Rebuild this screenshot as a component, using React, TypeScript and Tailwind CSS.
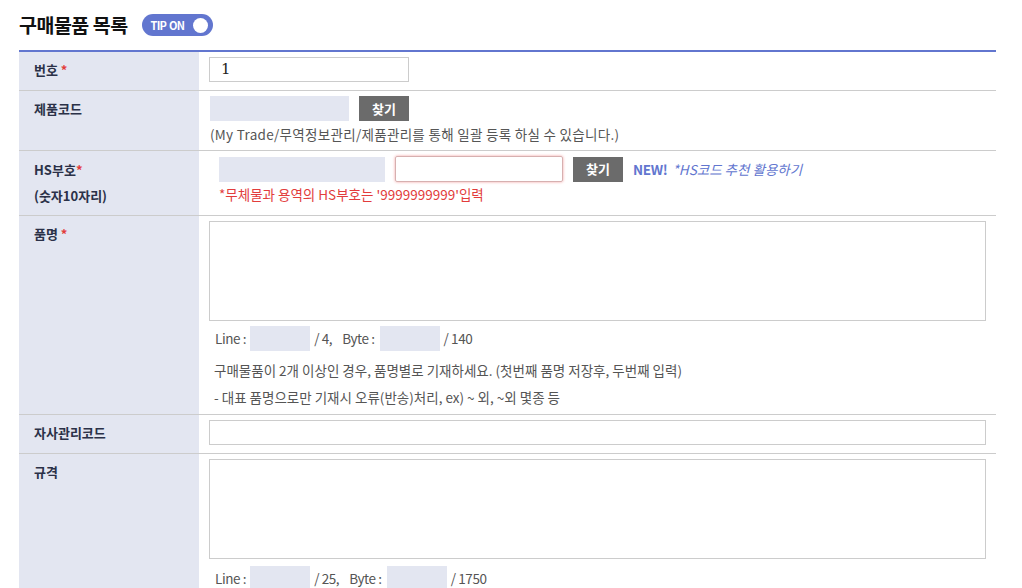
import React from 'react';

const font = { fontFamily: '"Noto Sans CJK KR", "Noto Sans", sans-serif' };

function Label({ children, star }: { children: React.ReactNode; star?: boolean }) {
  return (
    <div className="w-[180px] shrink-0 bg-[#e3e6f1] pl-[15px] pt-[8px] text-[13px] font-bold text-[#2b3148]">
      {children}
      {star && <span className="text-[#e23c3c]"> *</span>}
    </div>
  );
}

function Counter({ max, total }: { max: string; total: string }) {
  return (
    <div className="flex h-[25px] items-center text-[13.5px] text-[#555] tracking-[-0.4px]">
      <span className="ml-[6px]">Line :</span>
      <span className="ml-[4px] h-[25px] w-[60px] bg-[#e3e6f1]" />
      <span className="ml-[4px]">/ {max},</span>
      <span className="ml-[10px]">Byte :</span>
      <span className="ml-[5px] h-[25px] w-[60px] bg-[#e3e6f1]" />
      <span className="ml-[4px]">/ {total}</span>
    </div>
  );
}

export default function App() {
  return (
    <div className="h-[588px] w-[1022px] overflow-hidden bg-white" style={font}>
      <div className="mt-[13px] flex h-[24px] items-center pl-[19px]">
        <h2 className="text-[19.5px] font-bold leading-[24px] text-[#111] tracking-[-0.5px]">구매물품 목록</h2>
        <div className="ml-[14px] flex h-[22px] w-[71px] items-center justify-between rounded-full bg-[#6276cf] pl-[9px] pr-[5px]">
          <span className="flex gap-[3px] text-[11px] font-bold tracking-[-0.8px] text-white">
            <span>TIP</span>
            <span>ON</span>
          </span>
          <span className="h-[15px] w-[15px] rounded-full bg-white" />
        </div>
      </div>

      <div className="mx-[19px] mt-[13px] w-[977px] border-t-2 border-[#6276cf]">
        {/* 번호 */}
        <div className="flex h-[39px] border-b border-[#ccc]">
          <Label star>번호</Label>
          <div className="pl-[10px] pt-[5px]">
            <div className="flex h-[25px] w-[200px] items-center border border-[#ccc] pl-[11px] text-[15px] text-[#222]" style={{ fontFamily: '"DejaVu Serif", serif' }}>1</div>
          </div>
        </div>

        {/* 제품코드 */}
        <div className="flex h-[60px] border-b border-[#ccc]">
          <Label>제품코드</Label>
          <div className="pl-[11px] pt-[5px]">
            <div className="flex items-center">
              <span className="h-[25px] w-[139px] bg-[#e3e6f1]" />
              <button className="ml-[10px] flex h-[25px] w-[50px] items-center justify-center bg-[#6b6b6b] text-[13px] font-bold text-white">찾기</button>
            </div>
            <p className="mt-[3px] text-[13.5px] tracking-[0.3px] text-[#555]">
              (My Trade/무역정보관리/제품관리를 통해 일괄 등록 하실 수 있습니다.)
            </p>
          </div>
        </div>

        {/* HS부호 */}
        <div className="flex h-[65px] border-b border-[#ccc]">
          <div className="w-[180px] shrink-0 bg-[#e3e6f1] pl-[15px] pt-[6px] text-[13px] font-bold leading-[26px] text-[#2b3148]">
            HS부호<span className="text-[#e23c3c]">*</span>
            <br />
            (숫자10자리)
          </div>
          <div className="pl-[20px] pt-[5px]">
            <div className="flex items-center">
              <span className="h-[25px] w-[166px] bg-[#e3e6f1]" />
              <span className="ml-[10px] h-[26px] w-[168px] rounded-[2px] border border-[#d7b0b0] shadow-[0_0_3px_#f3a0a0]" />
              <button className="ml-[10px] flex h-[25px] w-[50px] items-center justify-center bg-[#6b6b6b] text-[13px] font-bold text-white">찾기</button>
              <span className="ml-[10px] text-[13.5px] font-bold tracking-[-0.3px] text-[#6276cf]">NEW!</span>
              <span className="ml-[5px] text-[13.5px] italic text-[#6276cf]">*HS코드 추천 활용하기</span>
            </div>
            <p className="mt-[2px] text-[13.5px] text-[#e23c3c]">*무체물과 용역의 HS부호는 '9999999999'입력</p>
          </div>
        </div>

        {/* 품명 */}
        <div className="flex h-[199px] border-b border-[#ccc]">
          <Label star>품명</Label>
          <div className="flex-1 pl-[10px] pr-[10px] pt-[5px]">
            <div className="h-[100px] w-full border border-[#ccc]" />
            <div className="mt-[5px]">
              <Counter max="4" total="140" />
            </div>
            <p className="mt-[6px] pl-[5px] text-[13.5px] leading-[27px] text-[#555]">
              구매물품이 2개 이상인 경우, 품명별로 기재하세요. (첫번째 품명 저장후, 두번째 입력)
              <br />- 대표 품명으로만 기재시 오류(반송)처리, ex) ~ 외, ~외 몇종 등
            </p>
          </div>
        </div>

        {/* 자사관리코드 */}
        <div className="flex h-[39px] border-b border-[#ccc]">
          <Label>자사관리코드</Label>
          <div className="flex-1 pl-[10px] pr-[10px] pt-[5px]">
            <div className="h-[25px] w-full border border-[#ccc]" />
          </div>
        </div>

        {/* 규격 */}
        <div className="flex h-[200px]">
          <Label>규격</Label>
          <div className="flex-1 pl-[10px] pr-[10px] pt-[5px]">
            <div className="h-[100px] w-full border border-[#ccc]" />
            <div className="mt-[7px]">
              <Counter max="25" total="1750" />
            </div>
          </div>
        </div>
      </div>
    </div>
  );
}
